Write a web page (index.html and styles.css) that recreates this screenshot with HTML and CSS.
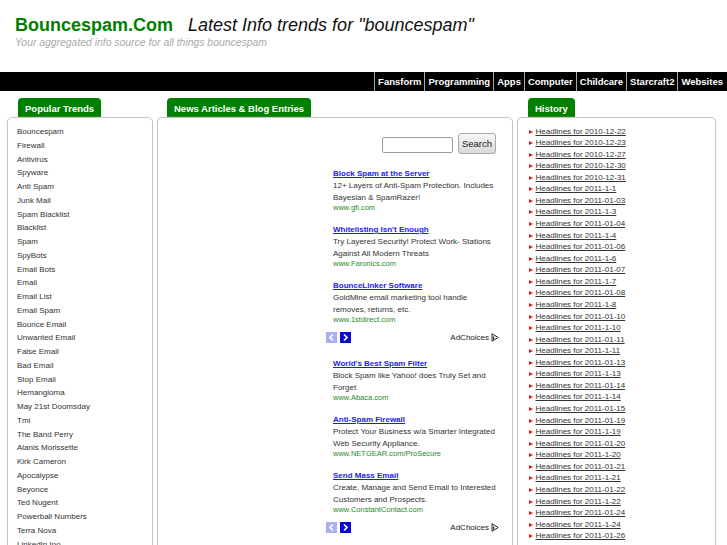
FILE: index.html
```html
<!DOCTYPE html>
<html>

<head>
    <title>Bouncespam.Com - Latest Info trends for "bouncespam"</title>
    <meta charset="utf-8">
    <link rel="stylesheet" href="styles.css">
</head>

<body>
    <div class="header">
        <h1><a class="site-name" href="#">Bouncespam.Com</a><span class="tagline">Latest Info trends for "bouncespam"</span></h1>
        <p class="slogan">Your aggregated info source for all things bouncespam</p>
    </div>

    <div class="topnav">
        <a href="#">Fansform</a>
        <a href="#">Programming</a>
        <a href="#">Apps</a>
        <a href="#">Computer</a>
        <a href="#">Childcare</a>
        <a href="#">Starcraft2</a>
        <a href="#">Websites</a>
    </div>

    <div class="main">
        <!-- left: popular trends -->
        <div class="column left-col">
            <div class="tab">Popular Trends</div>
            <div class="box">
                <ul class="trends">
                    <li><a href="#">Bouncespam</a></li>
                    <li><a href="#">Firewall</a></li>
                    <li><a href="#">Antivirus</a></li>
                    <li><a href="#">Spyware</a></li>
                    <li><a href="#">Anti Spam</a></li>
                    <li><a href="#">Junk Mail</a></li>
                    <li><a href="#">Spam Blacklist</a></li>
                    <li><a href="#">Blacklist</a></li>
                    <li><a href="#">Spam</a></li>
                    <li><a href="#">SpyBots</a></li>
                    <li><a href="#">Email Bots</a></li>
                    <li><a href="#">Email</a></li>
                    <li><a href="#">Email List</a></li>
                    <li><a href="#">Email Spam</a></li>
                    <li><a href="#">Bounce Email</a></li>
                    <li><a href="#">Unwanted Email</a></li>
                    <li><a href="#">False Email</a></li>
                    <li><a href="#">Bad Email</a></li>
                    <li><a href="#">Stop Email</a></li>
                    <li><a href="#">Hemangioma</a></li>
                    <li><a href="#">May 21st Doomsday</a></li>
                    <li><a href="#">Tmi</a></li>
                    <li><a href="#">The Band Perry</a></li>
                    <li><a href="#">Alanis Morissette</a></li>
                    <li><a href="#">Kirk Cameron</a></li>
                    <li><a href="#">Apocalypse</a></li>
                    <li><a href="#">Beyonce</a></li>
                    <li><a href="#">Ted Nugent</a></li>
                    <li><a href="#">Powerball Numbers</a></li>
                    <li><a href="#">Terra Nova</a></li>
                    <li><a href="#">LinkedIn Ipo</a></li>
                </ul>
            </div>
        </div>

        <!-- middle: news + ads -->
        <div class="column mid-col">
            <div class="tab">News Articles &amp; Blog Entries</div>
            <div class="box">
                <form class="search">
                    <input type="text">
                    <button type="button">Search</button>
                </form>

                <div class="ad-unit first">
                    <div class="ad">
                        <a class="ad-title" href="#">Block Spam at the Server</a>
                        <div class="ad-text">12+ Layers of Anti-Spam Protection. Includes Bayesian &amp; SpamRazer!</div>
                        <div class="ad-url">www.gfi.com</div>
                    </div>
                    <div class="ad">
                        <a class="ad-title" href="#">Whitelisting Isn't Enough</a>
                        <div class="ad-text">Try Layered Security! Protect Work- Stations Against All Modern Threats</div>
                        <div class="ad-url">www.Faronics.com</div>
                    </div>
                    <div class="ad">
                        <a class="ad-title" href="#">BounceLinker Software</a>
                        <div class="ad-text">GoldMine email marketing tool handle removes, returns, etc.</div>
                        <div class="ad-url">www.1stdirect.com</div>
                    </div>
                    <div class="ad-footer">
                        <span class="ad-nav"><svg width="11" height="11" viewBox="0 0 11 11"><rect width="11" height="11" fill="#a9aef6"/><path d="M7 2.5 L4 5.5 L7 8.5" fill="none" stroke="#fff" stroke-width="1.7"/></svg></span>
                        <span class="ad-nav"><svg width="11" height="11" viewBox="0 0 11 11"><rect width="11" height="11" fill="#0808dc"/><path d="M4 2.5 L7 5.5 L4 8.5" fill="none" stroke="#fff" stroke-width="1.7"/></svg></span>
                        <span class="adchoices">AdChoices<svg width="8" height="9" viewBox="0 0 8 9"><path d="M1 0.8 L7.2 4.5 L1 8.2 Z" fill="none" stroke="#222" stroke-width="1"/><path d="M2.6 3.4 V6.4" stroke="#222" stroke-width="1.2"/></svg></span>
                    </div>
                </div>

                <div class="ad-unit">
                    <div class="ad">
                        <a class="ad-title" href="#">World's Best Spam Filter</a>
                        <div class="ad-text">Block Spam like Yahoo! does Truly Set and Forget</div>
                        <div class="ad-url">www.Abaca.com</div>
                    </div>
                    <div class="ad">
                        <a class="ad-title" href="#">Anti-Spam Firewall</a>
                        <div class="ad-text">Protect Your Business w/a Smarter Integrated Web Security Appliance.</div>
                        <div class="ad-url">www.NETGEAR.com/ProSecure</div>
                    </div>
                    <div class="ad">
                        <a class="ad-title" href="#">Send Mass Email</a>
                        <div class="ad-text">Create, Manage and Send Email to Interested Customers and Prospects.</div>
                        <div class="ad-url">www.ConstantContact.com</div>
                    </div>
                    <div class="ad-footer">
                        <span class="ad-nav"><svg width="11" height="11" viewBox="0 0 11 11"><rect width="11" height="11" fill="#a9aef6"/><path d="M7 2.5 L4 5.5 L7 8.5" fill="none" stroke="#fff" stroke-width="1.7"/></svg></span>
                        <span class="ad-nav"><svg width="11" height="11" viewBox="0 0 11 11"><rect width="11" height="11" fill="#0808dc"/><path d="M4 2.5 L7 5.5 L4 8.5" fill="none" stroke="#fff" stroke-width="1.7"/></svg></span>
                        <span class="adchoices">AdChoices<svg width="8" height="9" viewBox="0 0 8 9"><path d="M1 0.8 L7.2 4.5 L1 8.2 Z" fill="none" stroke="#222" stroke-width="1"/><path d="M2.6 3.4 V6.4" stroke="#222" stroke-width="1.2"/></svg></span>
                    </div>
                </div>
            </div>
        </div>

        <!-- right: history -->
        <div class="column right-col">
            <div class="tab">History</div>
            <div class="box">
                <ul class="history">
                    <li><a href="#">Headlines for 2010-12-22</a></li>
                    <li><a href="#">Headlines for 2010-12-23</a></li>
                    <li><a href="#">Headlines for 2010-12-27</a></li>
                    <li><a href="#">Headlines for 2010-12-30</a></li>
                    <li><a href="#">Headlines for 2010-12-31</a></li>
                    <li><a href="#">Headlines for 2011-1-1</a></li>
                    <li><a href="#">Headlines for 2011-01-03</a></li>
                    <li><a href="#">Headlines for 2011-1-3</a></li>
                    <li><a href="#">Headlines for 2011-01-04</a></li>
                    <li><a href="#">Headlines for 2011-1-4</a></li>
                    <li><a href="#">Headlines for 2011-01-06</a></li>
                    <li><a href="#">Headlines for 2011-1-6</a></li>
                    <li><a href="#">Headlines for 2011-01-07</a></li>
                    <li><a href="#">Headlines for 2011-1-7</a></li>
                    <li><a href="#">Headlines for 2011-01-08</a></li>
                    <li><a href="#">Headlines for 2011-1-8</a></li>
                    <li><a href="#">Headlines for 2011-01-10</a></li>
                    <li><a href="#">Headlines for 2011-1-10</a></li>
                    <li><a href="#">Headlines for 2011-01-11</a></li>
                    <li><a href="#">Headlines for 2011-1-11</a></li>
                    <li><a href="#">Headlines for 2011-01-13</a></li>
                    <li><a href="#">Headlines for 2011-1-13</a></li>
                    <li><a href="#">Headlines for 2011-01-14</a></li>
                    <li><a href="#">Headlines for 2011-1-14</a></li>
                    <li><a href="#">Headlines for 2011-01-15</a></li>
                    <li><a href="#">Headlines for 2011-01-19</a></li>
                    <li><a href="#">Headlines for 2011-1-19</a></li>
                    <li><a href="#">Headlines for 2011-01-20</a></li>
                    <li><a href="#">Headlines for 2011-1-20</a></li>
                    <li><a href="#">Headlines for 2011-01-21</a></li>
                    <li><a href="#">Headlines for 2011-1-21</a></li>
                    <li><a href="#">Headlines for 2011-01-22</a></li>
                    <li><a href="#">Headlines for 2011-1-22</a></li>
                    <li><a href="#">Headlines for 2011-01-24</a></li>
                    <li><a href="#">Headlines for 2011-1-24</a></li>
                    <li><a href="#">Headlines for 2011-01-26</a></li>
                </ul>
            </div>
        </div>
    </div>
</body>

</html>
```

FILE: styles.css
```css
/* Basic styling */
body {
    margin: 0;
    font-family: "Liberation Sans", Arial, sans-serif;
    color: #333;
    background: #fff;
}

/* Header */
.header {
    padding: 14px 15px 0;
}

.header h1 {
    margin: 0;
    display: flex;
    gap: 15px;
    font-size: 18px;
    line-height: 22px;
    font-weight: normal;
    white-space: nowrap;
}

.site-name {
    color: #008000;
    font-weight: bold;
    text-decoration: none;
}

.tagline {
    font-style: italic;
    color: #111;
}

.slogan {
    margin: 1px 0 0;
    font-size: 10.4px;
    line-height: 12px;
    font-style: italic;
    color: #aaa;
}

/* Top navigation bar */
.topnav {
    margin-top: 23px;
    height: 19px;
    background: #000;
    display: flex;
    justify-content: flex-end;
    padding-right: 1px;
}

.topnav a {
    color: #fff;
    font-size: 9.5px;
    font-weight: bold;
    line-height: 19px;
    padding: 0 3px;
    border-left: 1px solid #aaa;
    text-decoration: none;
}

/* Three columns */
.main {
    display: flex;
    align-items: flex-start;
    gap: 4px;
    padding: 7px 11px 0 7px;
}

.column {
    display: flex;
    flex-direction: column;
    align-items: flex-start;
    flex: none;
}

.left-col {
    width: 146px;
}

.mid-col {
    width: 356px;
}

.right-col {
    width: 199px;
}

/* Green tab on top of each box */
.tab {
    margin-left: 11px;
    padding: 2px 7px 0;
    line-height: 17px;
    background: #008000;
    color: #fff;
    font-size: 9.5px;
    font-weight: bold;
    border-radius: 4px 4px 0 0;
}

.mid-col .tab {
    margin-left: 10px;
}

.box {
    align-self: stretch;
    border: 1px solid #c6c6c6;
    border-radius: 5px;
    box-shadow: 0 0 1px #e2e2e2;
    padding-bottom: 20px;
}

/* Popular trends list */
.left-col .box {
    padding-top: 7px;
    padding-left: 9px;
}

.trends {
    list-style: none;
    margin: 0;
    padding: 0;
    font-size: 8px;
    line-height: 13.75px;
}

.trends a {
    color: #333;
    text-decoration: none;
}

/* Search form */
.mid-col .box {
    padding-top: 15px;
}

.search {
    display: flex;
    justify-content: flex-end;
    align-items: flex-end;
    gap: 5px;
    margin: 0;
    padding-right: 16px;
}

.search input {
    width: 71px;
    height: 16px;
    box-sizing: border-box;
    margin: 0 0 1px;
    padding: 0 2px;
    border: 1px solid #9c9c9c;
    border-radius: 2px;
}

.search button {
    width: 38px;
    height: 21px;
    padding: 0;
    border: 1px solid #a8a8a8;
    border-radius: 3px;
    background: linear-gradient(#f6f6f6, #d9d9d9);
    font-family: "Liberation Sans", Arial, sans-serif;
    font-size: 9.5px;
    color: #222;
}

/* Text ads */
.ad-unit {
    width: 175px;
    margin: 0 12px 15px auto;
}

.ad-unit.first {
    margin-top: 14px;
}

.ad {
    padding-left: 8px;
    margin-bottom: 11px;
}

.ad:nth-last-child(2) {
    margin-bottom: 0;
}

.ad-title {
    display: block;
    font-size: 8px;
    line-height: 12px;
    font-weight: bold;
    color: #1c1cf0;
    text-decoration: underline;
}

.ad-text {
    font-size: 8px;
    line-height: 11.5px;
    color: #333;
}

.ad-url {
    font-size: 7.5px;
    line-height: 10px;
    color: #1e8c1e;
}

.ad-footer {
    display: flex;
    align-items: center;
    gap: 3px;
    margin-top: 7px;
    height: 11px;
    padding: 0 1px;
}

.ad-nav svg {
    display: block;
}

.adchoices {
    margin-left: auto;
    display: flex;
    align-items: center;
    gap: 2px;
    font-size: 8px;
    color: #222;
}

/* History list */
.right-col .box {
    padding-top: 7.5px;
    padding-left: 10.5px;
}

.history {
    list-style: none;
    margin: 0;
    padding: 0;
    font-size: 8px;
    line-height: 11.57px;
}

.history li::before {
    content: "";
    display: inline-block;
    border-top: 2.5px solid transparent;
    border-bottom: 2.5px solid transparent;
    border-left: 4.5px solid #e01818;
    margin-right: 3px;
    vertical-align: 0;
}

.history a {
    color: #333;
    text-decoration: underline;
}
```
